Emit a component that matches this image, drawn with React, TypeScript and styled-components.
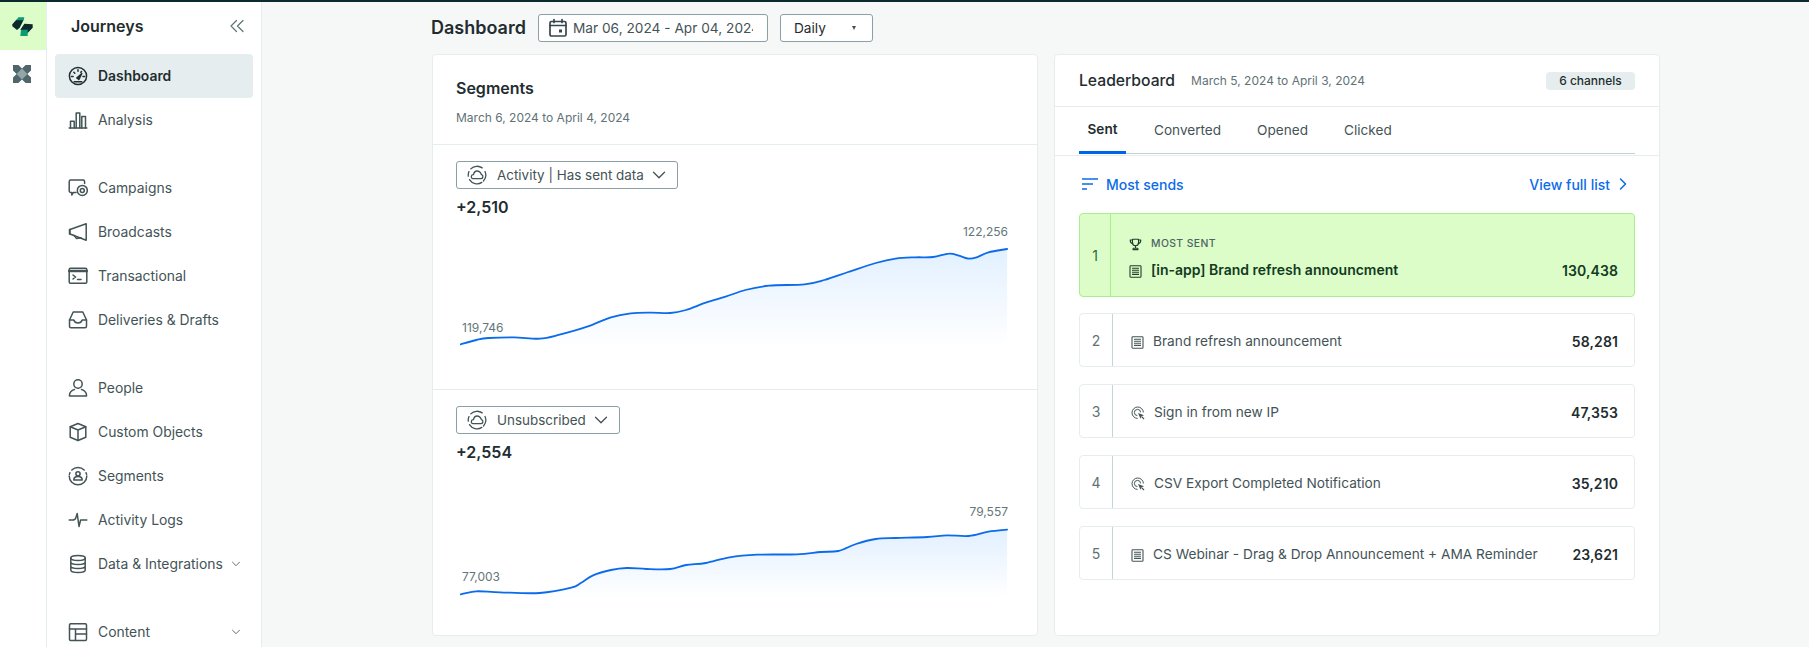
import React from "react";
import styled, { createGlobalStyle } from "styled-components";

const Global = createGlobalStyle`
  html, body { margin: 0; padding: 0; background: #f6f8f8; }
  body { font-family: Inter, "Liberation Sans", sans-serif; -webkit-font-smoothing: antialiased; }
  * { box-sizing: border-box; }
`;

const Page = styled.div`
  width: 1809px; height: 647px; overflow: hidden; display: flex;
  border-top: 2px solid #0b2a2e; background: #f6f8f8;
`;
const Rail = styled.aside`
  width: 47px; flex: none; background: #fff; border-right: 1px solid #e6edee;
  display: flex; flex-direction: column;
`;
const LogoCell = styled.div`
  height: 48px; background: #dcfdc8; display: flex; align-items: center; justify-content: center;
  padding-right: 2px;
`;
const RailItem = styled.div`
  height: 48px; display: flex; align-items: center; justify-content: center; padding-right: 2px;
`;
const Sidebar = styled.nav`
  width: 215px; flex: none; background: #fff; border-right: 1px solid #e6edee; padding: 0 8px;
`;
const SideHead = styled.div`
  height: 52px; display: flex; align-items: center; justify-content: space-between;
  padding: 0 9px 4px 16px; font-size: 16px; font-weight: 600; color: #1f2d30;
`;
const NavGroup = styled.div`
  margin-bottom: 24px;
`;
const NavItem = styled.div<{ $active?: boolean }>`
  height: 44px; display: flex; align-items: center; gap: 10px; padding: 0 12px 1px 13px; border-radius: 4px;
  font-size: 13.9px; color: ${p => (p.$active ? "#1f2d30" : "#435356")};
  font-weight: ${p => (p.$active ? 600 : 400)};
  background: ${p => (p.$active ? "#e6edee" : "transparent")};
  svg { flex: none; }
`;
const NavLabel = styled.span`
  flex: 1; min-width: 0; white-space: nowrap;
`;
const Main = styled.main`
  flex: 1; padding: 12px 149px 0 170px; min-width: 0;
`;
const TopRow = styled.div`
  height: 28px; display: flex; align-items: center; margin-bottom: 12px; margin-left: -1px;
`;
const PageTitle = styled.h1`
  margin: 0 12px 0 0; font-size: 18px; font-weight: 600; color: #1f2d30; line-height: 28px;
`;
const DateBox = styled.div`
  width: 230px; height: 28px; display: flex; align-items: center; gap: 5px; padding: 0 14px 0 9px;
  background: #fff; border: 1px solid #8aa0a4; border-radius: 3px; margin-right: 12px;
  font-size: 13.7px; color: #435356;
`;
const DateText = styled.span`
  flex: 1; overflow: hidden; white-space: nowrap;
`;
const Select = styled.div`
  width: 93px; height: 28px; display: flex; align-items: center; justify-content: space-between;
  padding: 0 16px 0 13px; background: #fff; border: 1px solid #8aa0a4; border-radius: 3px;
  font-size: 13.7px; color: #1f2d30;
`;
const Caret = styled.span`
  width: 0; height: 0; border-left: 2.5px solid transparent; border-right: 2.5px solid transparent;
  border-top: 4px solid #435356;
`;
const Columns = styled.div`
  display: grid; grid-template-columns: 606px 606px; gap: 16px;
`;
const Card = styled.section`
  height: 582px; background: #fff; border: 1px solid #e6edee; border-radius: 4px; overflow: hidden;
`;
const SegHead = styled.header`
  height: 90px; padding: 23px 23px 0; border-bottom: 1px solid #e6edee;
`;
const CardTitle = styled.h2`
  margin: 0; font-size: 16px; font-weight: 600; line-height: 20px; color: #1f2d30;
`;
const Sub = styled.p`
  margin: 12px 0 0; font-size: 12px; line-height: 16px; color: #5f7275;
`;
const Segment = styled.div<{ $last?: boolean }>`
  height: 245px; padding: 16px 23px 0;
  border-bottom: ${p => (p.$last ? "none" : "1px solid #e6edee")};
`;
const Drop = styled.div`
  display: inline-flex; height: 28px; align-items: center; gap: 6px; padding: 0 11px 0 10px;
  border: 1px solid #8aa0a4; border-radius: 3px; font-size: 13.45px; color: #435356; white-space: nowrap;
`;
const DropLabel = styled.span`
  margin-left: 4px; margin-right: 2px;
`;
const Delta = styled.div`
  margin-top: 8px; font-size: 16px; font-weight: 600; line-height: 20px; color: #1f2d30;
`;
const ChartWrap = styled.div`
  position: relative; width: 548px; height: 170px; margin-left: 4px; margin-top: 0;
`;
const ChartLabel = styled.span<{ $x: number; $y: number; $right?: boolean }>`
  position: absolute; top: ${p => p.$y}px; font-size: 12px; line-height: 14px; color: #647679;
  ${p => (p.$right ? `right: ${p.$x}px;` : `left: ${p.$x}px;`)}
`;
const LeadHead = styled.header`
  height: 52px; padding: 0 24px; display: flex; align-items: center; border-bottom: 1px solid #e6edee;
`;
const LeadTitle = styled.h2`
  margin: 0 16px 0 0; font-size: 15.7px; font-weight: 500; color: #1f2d30;
`;
const LeadDate = styled.span`
  flex: 1; font-size: 12px; color: #5f7275;
`;
const Badge = styled.span`
  width: 89px; height: 18px; border-radius: 4px; background: #e6edee; color: #1f2d30;
  font-size: 12px; font-weight: 500; display: flex; align-items: center; justify-content: center;
`;
const TabsBand = styled.div`
  height: 49px; padding: 0 24px; border-bottom: 1px solid #e6edee;
`;
const Tabs = styled.div`
  height: 47px; display: flex; border-bottom: 1px solid #c0d0d3;
`;
const Tab = styled.div<{ $active?: boolean }>`
  height: 47px; display: flex; align-items: center; justify-content: center;
  margin-right: ${p => (p.$active ? "28px" : "36px")};
  padding: 0 0 1px; font-size: 13.6px; width: ${p => (p.$active ? "47px" : "auto")};
  font-weight: ${p => (p.$active ? 600 : 400)}; color: ${p => (p.$active ? "#1f2d30" : "#435356")};
  border-bottom: ${p => (p.$active ? "3px solid #0064e6" : "none")};
`;
const SortRow = styled.div`
  height: 57px; padding: 0 31px 1px 27px; display: flex; align-items: center; justify-content: space-between;
  font-size: 14px; font-weight: 500; color: #0b6bea;
`;
const LinkItem = styled.span`
  display: inline-flex; align-items: center; gap: 8px;
`;
const Rows = styled.div`
  display: flex; flex-direction: column; gap: 17px; padding: 0 24px;
`;
const Row = styled.div<{ $top?: boolean }>`
  height: ${p => (p.$top ? 84 : 54)}px; display: flex; border-radius: 4px; flex: none;
  margin-bottom: ${p => (p.$top ? -1 : 0)}px;
  border: 1px solid ${p => (p.$top ? "#a7f08d" : "#e6edee")};
  background: ${p => (p.$top ? "#dcfdc8" : "#fff")};
`;
const Rank = styled.div<{ $top?: boolean }>`
  width: ${p => (p.$top ? 31 : 33)}px; flex: none; display: flex; align-items: center; justify-content: center;
  font-size: 14px; color: ${p => (p.$top ? "#286b3a" : "#5f7275")};
  border-right: 1px solid ${p => (p.$top ? "#a7f08d" : "#c7d5d8")};
`;
const RowBody = styled.div<{ $top?: boolean }>`
  flex: 1; min-width: 0; padding: ${p => (p.$top ? 6 : 2)}px 16px 0 18px;
  display: flex; flex-direction: column; justify-content: center; gap: 10px;
`;
const Eyebrow = styled.div`
  display: flex; align-items: center; gap: 9px; font-size: 10.4px; font-weight: 500; letter-spacing: .4px; color: #4f6366;
  line-height: 14px;
`;
const Line = styled.div`
  display: flex; align-items: center; gap: 9px;
`;
const RowIcon = styled.span`
  display: flex; flex: none; margin-top: 2px;
`;
const Name = styled.span<{ $top?: boolean }>`
  flex: 1; font-size: ${p => (p.$top ? 14 : 13.7)}px; white-space: nowrap; font-weight: ${p => (p.$top ? 600 : 400)};
  color: ${p => (p.$top ? "#123a22" : "#435356")}; line-height: 18px;
`;
const Num = styled.span<{ $top?: boolean }>`
  font-size: 14px; font-weight: 600; color: ${p => (p.$top ? "#123a22" : "#1f2d30")}; letter-spacing: .1px;
`;

const Ic: React.FC<{ children: React.ReactNode; s?: number; c?: string; w?: number }> = ({ children, s = 20, c = "#435356", w = 1.5 }) => (
  <svg width={s} height={s} viewBox="0 0 20 20" fill="none" stroke={c} strokeWidth={w} strokeLinecap="round" strokeLinejoin="round">
    {children}
  </svg>
);

const smooth = (p: [number, number][]) => {
  let d = `M${p[0][0]} ${p[0][1]}`;
  for (let i = 0; i < p.length - 1; i++) {
    const a = p[Math.max(i - 1, 0)], b = p[i], c = p[i + 1], e = p[Math.min(i + 2, p.length - 1)];
    d += ` C${(b[0] + (c[0] - a[0]) / 6).toFixed(1)} ${(b[1] + (c[1] - a[1]) / 6).toFixed(1)} ${(c[0] - (e[0] - b[0]) / 6).toFixed(1)} ${(c[1] - (e[1] - b[1]) / 6).toFixed(1)} ${c[0].toFixed(1)} ${c[1].toFixed(1)}`;
  }
  return d;
};

const chartA: [number, number][] = [[80,433],[120,420],[150,414],[215,412],[280,416],[330,404],[400,380],[460,352],[510,340],[560,338],[610,339],[650,330],[700,308],[750,290],[800,270],[860,257],[950,253],[1000,240],[1060,216],[1130,189],[1180,176],[1230,172],[1275,171],[1315,161],[1340,167],[1365,176],[1385,172],[1415,157],[1462,147]];
const chartB: [number, number][] = [[80,610],[120,601],[180,604],[280,606],[360,590],[385,575],[415,553],[460,537],[500,531],[550,534],[610,534],[650,522],[700,516],[760,499],[830,491],[930,490],[990,483],[1035,480],[1080,459],[1130,444],[1180,441],[1260,438],[1310,433],[1365,435],[1415,422],[1462,416]];

const toLocal = (pts: [number, number][], oy: number): [number, number][] =>
  pts.map(([x, y]) => [x / 2.529 + 430 - 461, y / 3 + oy]);

const Chart: React.FC<{ pts: [number, number][]; bottom: number; id: string; from: string; to: string; fromY: number; toY: number }> = ({ pts, bottom, id, from, to, fromY, toY }) => {
  const line = smooth(pts);
  const last = pts[pts.length - 1], first = pts[0];
  return (
    <ChartWrap>
      <svg width="548" height="170" viewBox="0 0 548 170">
        <defs>
          <linearGradient id={id} x1="0" x2="0" y1={Math.min(...pts.map(p => p[1]))} y2={bottom} gradientUnits="userSpaceOnUse">
            <stop offset="0" stopColor="#e2f0ff" />
            <stop offset="1" stopColor="#ffffff" />
          </linearGradient>
        </defs>
        <path d={`${line} L${last[0]} ${bottom} L${first[0]} ${bottom} Z`} fill={`url(#${id})`} />
        <path d={line} fill="none" stroke="#0b6bea" strokeWidth="1.8" strokeLinecap="round" />
      </svg>
      <ChartLabel $x={2} $y={fromY}>{from}</ChartLabel>
      <ChartLabel $x={0} $y={toY} $right>{to}</ChartLabel>
    </ChartWrap>
  );
};

const Chev = ({ s = 10 }: { s?: number }) => (
  <svg width={s} height={s} viewBox="0 0 10 10" fill="none" stroke="#5f7275" strokeWidth="1" strokeLinecap="round" strokeLinejoin="round">
    <path d="M1.500 3.200 5 6.700l3.500-3.500" />
  </svg>
);
const DropChev = () => (
  <svg width="14" height="14" viewBox="0 0 14 14" fill="none" stroke="#435356" strokeWidth="1.300" strokeLinecap="round" strokeLinejoin="round">
    <path d="M1.500 4.200 7 9.700l5.500-5.500" />
  </svg>
);
const Cloud = () => (
  <svg width="20" height="20" viewBox="0 0 20 20" fill="none" stroke="#435356" strokeWidth="1.300" strokeLinecap="round" strokeLinejoin="round">
    <path d="M3.800 3.900A8.800 8.800 0 0 1 15.200 2.900M18 6.500a8.800 8.800 0 0 1-1.500 9.500M14.800 17.400A8.800 8.800 0 0 1 2.500 14.600M1.300 11.200A8.800 8.800 0 0 1 2 6.600" />
    <path d="M5.700 13.600h8.400a2 2 0 0 0 .4-3.900C13.700 7.800 12 6 10 6S6.900 7.800 6.500 9.700a2 2 0 0 0-.8 3.900Z" />
  </svg>
);
const Doc = ({ c = "#435356" }: { c?: string }) => (
  <svg width="13" height="13" viewBox="0 0 13 13" fill="none" stroke={c} strokeWidth="1.100">
    <rect x="1" y=".8" width="11" height="11.400" rx=".8" />
    <path d="M3 3.300h7M3 5.300h7M3 7.300h7M3 9.400h7" />
  </svg>
);
const ClickIc = () => (
  <svg width="14" height="14" viewBox="0 0 14 14" fill="none" stroke="#435356" strokeWidth="1">
    <path d="M6.600 12.400A5.700 5.700 0 1 1 12.400 6.400" />
    <path d="M6.400 9.600A3.100 3.100 0 1 1 9.600 6.400" />
    <path d="M7 7l6 2.200-2.500 1-1 2.600Z" fill="#435356" stroke="none" />
    <path d="m10.600 10.600 2.400 2.400" strokeWidth="1.200" />
  </svg>
);
const Trophy = () => (
  <svg width="13" height="13" viewBox="0 0 13 13" fill="none" stroke="#1f3d2b" strokeWidth="1.100" strokeLinecap="round" strokeLinejoin="round">
    <path d="M3.500 1.200h6v3.500a3 3 0 0 1-6 0Z" />
    <path d="M3.500 2H1.200c0 2 .8 3.400 2.600 3.700M9.500 2h2.300c0 2-.8 3.400-2.600 3.700M6.500 7.700v2.600M4 11.600h5v-.6a.8.8 0 0 0-.8-.7H4.800a.8.8 0 0 0-.8.7Z" />
  </svg>
);

const nav = [
  [
    { label: "Dashboard", active: true, icon: (
      <Ic c="#1f2d30"><circle cx="10" cy="10" r="8.600" /><path d="M3.500 10.500h1.600M15 10.500h1.600M5.800 6.200l1 1M10 3.800v1.500M13.500 5.600l-.7.7M6.200 15.800h7.600" /><path d="m8.800 12 5-4.500-2.900 6Z" fill="#1f2d30" /></Ic>
    ) },
    { label: "Analysis", icon: (
      <Ic><path d="M1.200 18h17.600" /><path d="M2.500 18v-6.800h3.700V18M8.200 18V3h3.600v15M13.800 18V6.500h3.700V18" /></Ic>
    ) },
  ],
  [
    { label: "Campaigns", icon: (
      <Ic><path d="M8 14.400H5.400L3.800 17v-2.600H2.800a1.600 1.600 0 0 1-1.600-1.600V3.700a1.600 1.600 0 0 1 1.600-1.600h12.300a1.600 1.600 0 0 1 1.500 1.500v2" /><circle cx="14.300" cy="12.400" r="5" /><circle cx="14.300" cy="12.400" r="2" /></Ic>
    ) },
    { label: "Broadcasts", icon: (
      <Ic><path d="M18.200 1.800v16.400L2 12V7.500Z" /><path d="M2 7.500H1.500V12H2M6 13.400 8.500 16.600l4.500-.9" /></Ic>
    ) },
    { label: "Transactional", icon: (
      <Ic><rect x="1.200" y="2.200" width="17.600" height="15" rx="1.200" /><path d="M1.200 5h17.600" strokeWidth="2.400" /><path d="m5 9 2.600 2L5 13M9.500 13.400h3.500" /></Ic>
    ) },
    { label: "Deliveries & Drafts", icon: (
      <Ic><path d="M5.200 2h9.600l3.700 8v6.300a1.500 1.500 0 0 1-1.500 1.500h-14a1.500 1.500 0 0 1-1.500-1.500V10Z" /><path d="M1.500 10h4.300c.6 2 2 3 4.200 3s3.600-1 4.200-3h4.300" /></Ic>
    ) },
  ],
  [
    { label: "People", icon: (
      <Ic><circle cx="10" cy="6" r="4.200" /><path d="M1.500 18v-1c0-3 3-5.200 5-5.600M18.500 18v-1c0-3-3-5.200-5-5.600M1.500 18h17" /></Ic>
    ) },
    { label: "Custom Objects", icon: (
      <Ic><path d="M10 1.500 17.800 4.800v10.400L10 18.500l-7.800-3.300V4.800Z" /><path d="M2.200 4.800 10 8l7.800-3.200M10 8v10.500" /></Ic>
    ) },
    { label: "Segments", icon: (
      <Ic><path d="M3.800 4A8.800 8.800 0 0 1 16.200 4M18.800 10a8.800 8.800 0 0 1-17.600 0" /><path d="M1.400 8.400 1.900 6.800M18.600 8.400l-.5-1.600" /><circle cx="10" cy="7.800" r="2.100" /><path d="M5.800 14h8.400c0-2.200-1.900-3.400-4.200-3.400S5.800 11.800 5.800 14Z" /></Ic>
    ) },
    { label: "Activity Logs", icon: (
      <Ic><path d="M1.200 10h4.300l2-1.200L9.200 3.500 11 16.500l1.600-6.500h6.200" /></Ic>
    ) },
    { label: "Data & Integrations", chev: true, icon: (
      <Ic><ellipse cx="10" cy="4" rx="7.200" ry="2.500" /><path d="M2.800 4v12c0 1.400 3.200 2.500 7.200 2.500s7.200-1.100 7.200-2.500V4M2.800 8c0 1.400 3.200 2.500 7.200 2.500S17.200 9.400 17.200 8M2.800 12c0 1.400 3.200 2.500 7.200 2.500s7.200-1.100 7.200-2.500" /></Ic>
    ) },
  ],
  [
    { label: "Content", chev: true, icon: (
      <Ic><rect x="1.500" y="1.800" width="17" height="16.600" rx="1.200" /><path d="M1.500 7h17M7.500 18.400V7M7.500 12h11" /></Ic>
    ) },
  ],
] as { label: string; active?: boolean; chev?: boolean; icon: React.ReactNode }[][];

const rows = [
  { name: "Brand refresh announcement", n: "58,281", k: "doc" },
  { name: "Sign in from new IP", n: "47,353", k: "click" },
  { name: "CSV Export Completed Notification", n: "35,210", k: "click" },
  { name: "CS Webinar - Drag & Drop Announcement + AMA Reminder", n: "23,621", k: "doc" },
];

export default function App() {
  return (
    <Page>
      <Global />
      <Rail>
        <LogoCell>
          <svg width="21" height="19" viewBox="36 48 61 57">
            <path d="M36 70 48 56h22L58 80l-8 7-14-11Z" fill="#0b2a2e" />
            <path d="M54 49h18l-2 9H48Z" fill="#0b9a72" />
            <path d="M72 68l25 2v10L82 96 60 86Z" fill="#0b2a2e" />
            <path d="M62 86h18l2-1v20H60Z" fill="#0b9a72" />
          </svg>
        </LogoCell>
        <RailItem>
          <svg width="18" height="18" viewBox="0 0 20 20">
            <path d="M0 0h6l4 4 4-4h6v6l-4 4 4 4v6h-6l-4-4-4 4H0v-6l4-4-4-4Z" fill="#51666a" />
            <path d="M10 4 16 10 10 16 4 10Z" fill="#93a5a8" />
          </svg>
        </RailItem>
      </Rail>
      <Sidebar>
        <SideHead>
          Journeys
          <svg width="14" height="14" viewBox="0 0 14 14" fill="none" stroke="#5f7275" strokeWidth="1.200" strokeLinecap="round" strokeLinejoin="round">
            <path d="M6.500 1.500 1 7l5.500 5.500M13 1.500 7.500 7l5.500 5.500" />
          </svg>
        </SideHead>
        {nav.map((g, i) => (
          <NavGroup key={i}>
            {g.map(it => (
              <NavItem key={it.label} $active={it.active}>
                {it.icon}
                <NavLabel>{it.label}</NavLabel>
                {it.chev && <Chev />}
              </NavItem>
            ))}
          </NavGroup>
        ))}
      </Sidebar>
      <Main>
        <TopRow>
          <PageTitle>Dashboard</PageTitle>
          <DateBox>
            <Ic s={20} c="#34474a" w={1.700}><rect x="2" y="3.500" width="16" height="14.500" rx="1.500" /><path d="M2 7.500h16M6 1.500v3M14 1.500v3" /><rect x="11" y="11.500" width="3" height="3" fill="#34474a" stroke="none" /></Ic>
            <DateText>Mar 06, 2024 - Apr 04, 2024</DateText>
          </DateBox>
          <Select>Daily<Caret /></Select>
        </TopRow>
        <Columns>
          <Card>
            <SegHead>
              <CardTitle>Segments</CardTitle>
              <Sub>March 6, 2024 to April 4, 2024</Sub>
            </SegHead>
            <Segment>
              <Drop><Cloud /><DropLabel>Activity | Has sent data</DropLabel><DropChev /></Drop>
              <Delta>+2,510</Delta>
              <Chart id="a" pts={toLocal(chartA, 200 - 217)} bottom={130} from="119,746" to="122,256" fromY={104} toY={8} />
            </Segment>
            <Segment $last>
              <Drop><Cloud /><DropLabel>Unsubscribed</DropLabel><DropChev /></Drop>
              <Delta>+2,554</Delta>
              <Chart id="b" pts={toLocal(chartB, 390 - 461)} bottom={136} from="77,003" to="79,557" fromY={108} toY={43} />
            </Segment>
          </Card>
          <Card>
            <LeadHead>
              <LeadTitle>Leaderboard</LeadTitle>
              <LeadDate>March 5, 2024 to April 3, 2024</LeadDate>
              <Badge>6 channels</Badge>
            </LeadHead>
            <TabsBand>
              <Tabs>
                <Tab $active>Sent</Tab>
                <Tab>Converted</Tab>
                <Tab>Opened</Tab>
                <Tab>Clicked</Tab>
              </Tabs>
            </TabsBand>
            <SortRow>
              <LinkItem>
                <svg width="16" height="14" viewBox="0 0 16 14" fill="none" stroke="#0b6bea" strokeWidth="1.500"><path d="M0 2h16M0 7h11M0 12h5" /></svg>
                Most sends
              </LinkItem>
              <LinkItem>
                View full list
                <svg width="10" height="14" viewBox="0 0 10 14" fill="none" stroke="#0b6bea" strokeWidth="1.500" strokeLinecap="round" strokeLinejoin="round"><path d="m2.500 2 5 5-5 5" /></svg>
              </LinkItem>
            </SortRow>
            <Rows>
              <Row $top>
                <Rank $top>1</Rank>
                <RowBody $top>
                  <Eyebrow><Trophy />MOST SENT</Eyebrow>
                  <Line>
                    <RowIcon><Doc c="#1f3d2b" /></RowIcon>
                    <Name $top>[in-app] Brand refresh announcment</Name>
                    <Num $top>130,438</Num>
                  </Line>
                </RowBody>
              </Row>
              {rows.map((r, i) => (
                <Row key={r.name}>
                  <Rank>{i + 2}</Rank>
                  <RowBody>
                    <Line>
                      <RowIcon>{r.k === "doc" ? <Doc /> : <ClickIc />}</RowIcon>
                      <Name>{r.name}</Name>
                      <Num>{r.n}</Num>
                    </Line>
                  </RowBody>
                </Row>
              ))}
            </Rows>
          </Card>
        </Columns>
      </Main>
    </Page>
  );
}
